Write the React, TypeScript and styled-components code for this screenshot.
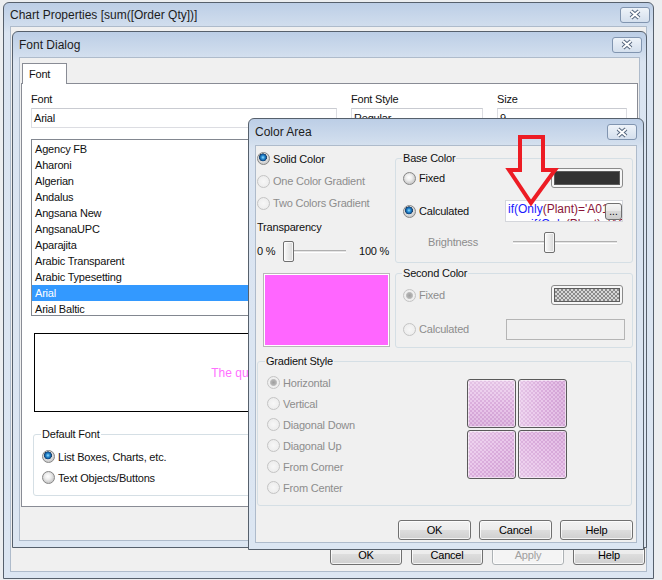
import React from "react";
import styled, { createGlobalStyle } from "styled-components";

const GlobalStyle = createGlobalStyle`
  html, body {
    margin: 0;
    padding: 0;
  }
  body {
    background: #eceef0;
    font-family: "Liberation Sans", Arial, sans-serif;
    font-size: 11px;
    letter-spacing: -0.2px;
    color: #111;
  }
`;

const Desktop = styled.div`
  position: relative;
  width: 662px;
  height: 580px;
  overflow: hidden;
`;

/* ---------- window chrome ---------- */

interface FrameProps {
  $x: number;
  $y: number;
  $w: number;
  $h: number;
  $z: number;
}

const WindowFrame = styled.div<FrameProps>`
  position: absolute;
  left: ${(p) => p.$x}px;
  top: ${(p) => p.$y}px;
  width: ${(p) => p.$w}px;
  height: ${(p) => p.$h}px;
  z-index: ${(p) => p.$z};
  box-sizing: border-box;
  display: flex;
  flex-direction: column;
  border: 1px solid #56606c;
  border-radius: 6px 6px 0 0;
  background: linear-gradient(
    to bottom,
    #bccee6 0,
    #d0dded 22px,
    #dae4f1 30px,
    #dce6f2 100%
  );
`;

const TitleBar = styled.div<{ $h: number; $gap: number }>`
  flex: none;
  height: ${(p) => p.$h}px;
  display: flex;
  align-items: center;
  justify-content: space-between;
  padding: 0 ${(p) => p.$gap}px 0 6px;
`;

const TitleText = styled.span`
  font-size: 12px;
  letter-spacing: 0;
  color: #1c1c1c;
  white-space: nowrap;
`;

const CloseButton = styled.div`
  width: 30px;
  height: 16px;
  box-sizing: border-box;
  border: 1px solid #8195b0;
  border-radius: 3px;
  background: linear-gradient(#eef3f9, #d4dfed);
  display: flex;
  align-items: center;
  justify-content: center;
`;

const ClientArea = styled.div`
  flex: 1;
  min-height: 0;
  margin: 0 6px 6px;
  box-sizing: border-box;
  background: #f0f0f0;
  border: 1px solid #aebbcb;
  display: flex;
  flex-direction: column;
`;

const CloseGlyph = () => (
  <svg width="14" height="11" viewBox="0 0 14 11">
    <path d="M3 2 L11 9 M11 2 L3 9" stroke="#56677e" strokeWidth="4" />
    <path d="M3 2 L11 9 M11 2 L3 9" stroke="#ffffff" strokeWidth="2" />
  </svg>
);

interface WindowProps {
  x: number;
  y: number;
  w: number;
  h: number;
  z: number;
  title: string;
  titleH: number;
  closeGap: number;
  children: React.ReactNode;
}

const Window = ({ x, y, w, h, z, title, titleH, closeGap, children }: WindowProps) => (
  <WindowFrame $x={x} $y={y} $w={w} $h={h} $z={z}>
    <TitleBar $h={titleH} $gap={closeGap}>
      <TitleText>{title}</TitleText>
      <CloseButton>
        <CloseGlyph />
      </CloseButton>
    </TitleBar>
    {children}
  </WindowFrame>
);

/* ---------- common controls ---------- */

const PushButton = styled.button<{ $w: number; $h: number; $disabled?: boolean }>`
  width: ${(p) => p.$w}px;
  height: ${(p) => p.$h}px;
  box-sizing: border-box;
  padding: 0;
  font: inherit;
  letter-spacing: inherit;
  border: 1px solid ${(p) => (p.$disabled ? "#adb2b5" : "#707070")};
  border-radius: 3px;
  background: ${(p) =>
    p.$disabled
      ? "#f4f4f4"
      : "linear-gradient(#f2f2f2 0, #ebebeb 50%, #dddddd 50%, #cfcfcf 100%)"};
  box-shadow: inset 0 0 0 1px rgba(255, 255, 255, 0.75);
  color: ${(p) => (p.$disabled ? "#a0a0a0" : "#000")};
`;

const ButtonRow = styled.div<{ $gap: number; $mt?: number }>`
  display: flex;
  justify-content: flex-end;
  gap: ${(p) => p.$gap}px;
  margin-top: ${(p) => p.$mt ?? 0}px;
`;

const OuterClient = styled(ClientArea)`
  justify-content: flex-end;
  padding: 0 1px 6px 0;
`;

const Row = styled.div<{ $h: number; $mt?: number }>`
  display: flex;
  align-items: center;
  height: ${(p) => p.$h}px;
  margin-top: ${(p) => p.$mt ?? 0}px;
`;

const RadioDot = styled.span<{ $checked?: boolean; $disabled?: boolean }>`
  flex: none;
  width: 13px;
  height: 13px;
  box-sizing: border-box;
  margin-right: 3px;
  border-radius: 50%;
  border: 1px solid ${(p) => (p.$disabled ? "#c4c4c4" : "#868686")};
  background: ${(p) => {
    const dot = !p.$checked
      ? ""
      : p.$disabled
      ? "radial-gradient(circle at 50% 50%, #9f9f9f 0, #b3b3b3 2.6px, #c9c9c9 3.4px, transparent 3.8px), "
      : "radial-gradient(circle at 45% 40%, #9ce2ff 0, #2f93d8 1.6px, #0f5496 3.2px, #24405f 3.8px, transparent 4.2px), ";
    const base = p.$disabled
      ? "radial-gradient(circle at 50% 50%, #f7f7f7 0, #ececec 6px)"
      : "radial-gradient(circle at 45% 40%, #ffffff 0, #eeeeee 3px, #cdcdcd 6px)";
    return dot + base;
  }};
`;

const OptionText = styled.span<{ $disabled?: boolean; $indent?: number; $w?: number }>`
  white-space: nowrap;
  box-sizing: border-box;
  width: ${(p) => (p.$w ? `${p.$w}px` : "auto")};
  padding-left: ${(p) => p.$indent ?? 0}px;
  color: ${(p) => (p.$disabled ? "#8d8d8d" : "#111")};
`;

interface RadioProps {
  label: string;
  h: number;
  mt?: number;
  checked?: boolean;
  disabled?: boolean;
  children?: React.ReactNode;
}

const Radio = ({ label, h, mt, checked, disabled, children }: RadioProps) => (
  <Row $h={h} $mt={mt}>
    <RadioDot $checked={checked} $disabled={disabled} />
    <OptionText $disabled={disabled}>{label}</OptionText>
    {children}
  </Row>
);

const GroupBox = styled.fieldset<{ $w?: number; $h: number; $mt?: number; $ml?: number }>`
  margin: ${(p) => p.$mt ?? 0}px 0 0 ${(p) => p.$ml ?? 0}px;
  padding: 0;
  width: ${(p) => (p.$w ? `${p.$w}px` : "auto")};
  height: ${(p) => p.$h}px;
  box-sizing: border-box;
  min-width: 0;
  border: 1px solid #d5dfe5;
  border-radius: 3px;
`;

const GroupLabel = styled.legend<{ $ml: number }>`
  margin-left: ${(p) => p.$ml}px;
  padding: 0 1px;
  line-height: 13px;
  color: #111;
`;

const GroupBody = styled.div<{ $pl: number; $pr?: number }>`
  padding: 0 ${(p) => p.$pr ?? 0}px 0 ${(p) => p.$pl}px;
`;

const Spacer = styled.div`
  flex: 1;
`;

const SliderTrack = styled.div<{ $w: number }>`
  width: ${(p) => p.$w}px;
  height: 21px;
  display: flex;
  align-items: center;
  background: linear-gradient(
    to bottom,
    transparent 9px,
    #b0b0b0 9px,
    #b0b0b0 10px,
    #e4e4e4 10px,
    #e4e4e4 11px,
    #ffffff 11px,
    #ffffff 12px,
    transparent 12px
  );
`;

const SliderThumb = styled.div<{ $at: number }>`
  margin-left: ${(p) => p.$at}px;
  width: 11px;
  height: 21px;
  box-sizing: border-box;
  border: 1px solid #707070;
  border-radius: 2px;
  background: linear-gradient(to right, #fafafa, #e6e6e6 60%, #d8d8d8);
  box-shadow: inset 0 0 0 1px rgba(255, 255, 255, 0.7);
`;

const TextBox = styled.div<{ $disabled?: boolean; $w?: number; $h: number }>`
  width: ${(p) => (p.$w ? `${p.$w}px` : "auto")};
  height: ${(p) => p.$h}px;
  box-sizing: border-box;
  border: 1px solid ${(p) => (p.$disabled ? "#b5b5b5" : "#dcdde2")};
  border-top-color: ${(p) => (p.$disabled ? "#b5b5b5" : "#c9cbd1")};
  background: ${(p) => (p.$disabled ? "#f0f0f0" : "#fff")};
  padding-left: 2px;
  line-height: ${(p) => p.$h - 2}px;
  overflow: hidden;
  white-space: nowrap;
`;

/* ---------- font dialog ---------- */

const FontClient = styled(ClientArea)`
  padding: 5px 1px 0;
`;

const TabStrip = styled.div`
  display: flex;
  height: 20px;
`;

const Tab = styled.div`
  position: relative;
  z-index: 1;
  margin-left: 1px;
  width: 45px;
  height: 21px;
  box-sizing: border-box;
  border: 1px solid #898c95;
  border-bottom: none;
  background: #fff;
  padding-left: 6px;
  line-height: 20px;
`;

const TabPanel = styled.div`
  width: 617px;
  height: 424px;
  box-sizing: border-box;
  border: 1px solid #898c95;
  background: #fff;
  padding: 8px 0 0 9px;
`;

const FieldGrid = styled.div`
  display: grid;
  grid-template-columns: 306px 132px 130px;
  column-gap: 14px;
`;

const FieldLabel = styled.div`
  line-height: 14px;
`;

const FieldBox = styled(TextBox)`
  margin-top: 2px;
`;

const ListBox = styled.div`
  margin-top: 11px;
  height: 177px;
  box-sizing: border-box;
  border: 1px solid #828790;
  background: #fff;
  padding-top: 1px;
  overflow: hidden;
`;

const ListItem = styled.div<{ $selected?: boolean }>`
  height: 16px;
  line-height: 16px;
  padding-left: 3px;
  white-space: nowrap;
  background: ${(p) => (p.$selected ? "#3399ff" : "transparent")};
  color: ${(p) => (p.$selected ? "#fff" : "#111")};
`;

const Preview = styled.div`
  margin: 17px 0 0 3px;
  width: 592px;
  height: 79px;
  box-sizing: border-box;
  border: 1px solid #000;
  display: flex;
  align-items: center;
  justify-content: center;
  font-size: 12px;
  letter-spacing: 0;
  color: #ff70ff;
`;

/* ---------- color area ---------- */

const ColorClient = styled(ClientArea)`
  padding: 1px 3px 0 1px;
`;

const TopSection = styled.div`
  display: grid;
  grid-template-columns: 138px 238px;
  align-items: start;
`;

const Column = styled.div<{ $grow?: boolean; $pt?: number }>`
  display: flex;
  flex-direction: column;
  flex: ${(p) => (p.$grow ? 1 : "none")};
  padding-top: ${(p) => p.$pt ?? 0}px;
`;

const SliderLine = styled.div`
  display: grid;
  grid-template-columns: 26px 63px auto;
  align-items: center;
  height: 24px;
  margin-top: 1px;
  & > span:last-child {
    padding-left: 13px;
  }
`;

const Swatch = styled.div<{ $color: string }>`
  margin: 10px 0 0 6px;
  width: 127px;
  height: 74px;
  box-sizing: border-box;
  border: 1px solid #b8b8b8;
  padding: 1px;
  background: #fff;
  &::before {
    content: "";
    display: block;
    height: 100%;
    background: ${(p) => p.$color};
  }
`;

const ColorButton = styled.div<{ $fill: string }>`
  width: 72px;
  height: 20px;
  box-sizing: border-box;
  border: 1px solid #8a8a8a;
  border-radius: 3px;
  padding: 2px;
  background: #f6f6f6;
  &::before {
    content: "";
    display: block;
    height: 100%;
    box-sizing: border-box;
    border: 1px solid #5c5c5c;
    background: ${(p) => p.$fill};
  }
`;

const FormulaBox = styled.div`
  position: relative;
  margin-left: auto;
  width: 118px;
  height: 22px;
  box-sizing: border-box;
  border: 1px solid #d4d6db;
  background: #fff;
  padding: 2px 0 0 2px;
  font-size: 12px;
  letter-spacing: 0;
  line-height: 13px;
  overflow: hidden;
  white-space: nowrap;
`;

const FormulaLine = styled.div<{ $indent?: number; $mt?: number }>`
  padding-left: ${(p) => p.$indent ?? 0}px;
  margin-top: ${(p) => p.$mt ?? 0}px;
`;

const Fn = styled.span`
  color: #1a1aff;
`;

const Field = styled.span`
  color: #8a1538;
`;

const EllipsisButton = styled.div`
  position: absolute;
  right: 0;
  top: 2px;
  width: 17px;
  height: 17px;
  box-sizing: border-box;
  border: 1px solid #707070;
  border-radius: 3px;
  background: linear-gradient(#f4f4f4 0, #e8e8e8 50%, #d9d9d9 50%, #cdcdcd 100%);
  font-size: 10px;
  line-height: 16px;
  text-align: center;
  color: #000;
`;

const DisabledField = styled(TextBox)`
  margin-right: -2px;
`;

const GradientBody = styled.div`
  display: flex;
  padding-left: 9px;
`;

const TileGrid = styled.div`
  margin: 11px 64px 0 0;
  display: grid;
  grid-template-columns: 49px 49px;
  grid-auto-rows: 49px;
  gap: 2px;
`;

const Tile = styled.div<{ $dir: string }>`
  box-sizing: border-box;
  border: 1px solid #5a5a5a;
  border-radius: 3px;
  box-shadow: inset 0 0 0 1px rgba(255, 255, 255, 0.55);
  background: linear-gradient(${(p) => p.$dir}, rgba(255, 255, 255, 0.3), rgba(255, 255, 255, 0) 55%, rgba(120, 60, 130, 0.08)),
    repeating-conic-gradient(#e9c6ea 0 25%, #d9abdb 0 50%) 0 0 / 4px 4px;
`;

const RedArrow = styled.svg`
  position: absolute;
  left: 500px;
  top: 128px;
  z-index: 10;
  overflow: visible;
`;

const fontNames = [
  "Agency FB",
  "Aharoni",
  "Algerian",
  "Andalus",
  "Angsana New",
  "AngsanaUPC",
  "Aparajita",
  "Arabic Transparent",
  "Arabic Typesetting",
  "Arial",
  "Arial Baltic",
];

const gradientStyles = [
  "Horizontal",
  "Vertical",
  "Diagonal Down",
  "Diagonal Up",
  "From Corner",
  "From Center",
];

const tileDirections = ["to bottom", "to right", "135deg", "45deg"];

export default function App() {
  return (
    <>
      <GlobalStyle />
      <Desktop>
        <Window
          x={3}
          y={2}
          w={651}
          h={577}
          z={1}
          title="Chart Properties [sum([Order Qty])]"
          titleH={23}
          closeGap={3}
        >
          <OuterClient>
            <ButtonRow $gap={9}>
              <PushButton $w={72} $h={21}>OK</PushButton>
              <PushButton $w={72} $h={21}>Cancel</PushButton>
              <PushButton $w={72} $h={21} $disabled>Apply</PushButton>
              <PushButton $w={72} $h={21}>Help</PushButton>
            </ButtonRow>
          </OuterClient>
        </Window>

        <Window x={12} y={31} w={635} h={517} z={2} title="Font Dialog" titleH={25} closeGap={4}>
          <FontClient>
            <TabStrip>
              <Tab>Font</Tab>
            </TabStrip>
            <TabPanel>
              <FieldGrid>
                <FieldLabel>Font</FieldLabel>
                <FieldLabel>Font Style</FieldLabel>
                <FieldLabel>Size</FieldLabel>
                <FieldBox $h={20}>Arial</FieldBox>
                <FieldBox $h={20}>Regular</FieldBox>
                <FieldBox $h={20}>9</FieldBox>
                <ListBox>
                  {fontNames.map((name) => (
                    <ListItem key={name} $selected={name === "Arial"}>
                      {name}
                    </ListItem>
                  ))}
                </ListBox>
                <ListBox />
                <ListBox />
              </FieldGrid>
              <Preview>The quick brown fox jumps over the lazy dog</Preview>
              <GroupBox $w={592} $h={68} $mt={16} $ml={2}>
                <GroupLabel $ml={7}>Default Font</GroupLabel>
                <GroupBody $pl={8}>
                  <Radio label="List Boxes, Charts, etc." h={21} mt={5} checked />
                  <Radio label="Text Objects/Buttons" h={21} />
                </GroupBody>
              </GroupBox>
            </TabPanel>
          </FontClient>
        </Window>

        <Window x={248} y={118} w={396} h={432} z={3} title="Color Area" titleH={26} closeGap={6}>
          <ColorClient>
            <TopSection>
              <Column>
                <Radio label="Solid Color" h={23} checked />
                <Radio label="One Color Gradient" h={22} disabled />
                <Radio label="Two Colors Gradient" h={22} disabled />
                <Row $h={22} $mt={2}>
                  <OptionText>Transparency</OptionText>
                </Row>
                <SliderLine>
                  <span>0 %</span>
                  <SliderTrack $w={63}>
                    <SliderThumb $at={0} />
                  </SliderTrack>
                  <span>100 %</span>
                </SliderLine>
                <Swatch $color="#ff66ff" />
              </Column>

              <Column>
                <GroupBox $h={111} $mt={5}>
                  <GroupLabel $ml={6}>Base Color</GroupLabel>
                  <GroupBody $pl={7} $pr={9}>
                    <Radio label="Fixed" h={24} mt={1}>
                      <Spacer />
                      <ColorButton $fill="#333333" />
                    </Radio>
                    <Radio label="Calculated" h={24} mt={9} checked>
                      <FormulaBox>
                        <FormulaLine>
                          <Fn>if(Only</Fn>
                          <Field>(Plant)='A01'</Field>
                        </FormulaLine>
                        <FormulaLine $indent={23} $mt={2}>
                          <Fn>if(Only</Fn>
                          <Field>(Plant)='A02'</Field>
                        </FormulaLine>
                        <EllipsisButton>...</EllipsisButton>
                      </FormulaBox>
                    </Radio>
                    <Row $h={24} $mt={7}>
                      <OptionText $disabled $indent={25} $w={110}>
                        Brightness
                      </OptionText>
                      <SliderTrack $w={104}>
                        <SliderThumb $at={31} />
                      </SliderTrack>
                    </Row>
                  </GroupBody>
                </GroupBox>

                <GroupBox $h={81} $mt={4}>
                  <GroupLabel $ml={6}>Second Color</GroupLabel>
                  <GroupBody $pl={7} $pr={9}>
                    <Radio label="Fixed" h={24} mt={3} checked disabled>
                      <Spacer />
                      <ColorButton $fill="repeating-conic-gradient(#8a8a8a 0 25%, #d6d6d6 0 50%) 0 0 / 4px 4px" />
                    </Radio>
                    <Radio label="Calculated" h={24} mt={10} disabled>
                      <Spacer />
                      <DisabledField $disabled $w={119} $h={21} />
                    </Radio>
                  </GroupBody>
                </GroupBox>
              </Column>
            </TopSection>

            <GroupBox $w={375} $h={151} $mt={7}>
              <GroupLabel $ml={7}>Gradient Style</GroupLabel>
              <GradientBody>
                <Column $grow $pt={4}>
                  {gradientStyles.map((name, i) => (
                    <Radio key={name} label={name} h={21} checked={i === 0} disabled />
                  ))}
                </Column>
                <TileGrid>
                  {tileDirections.map((dir) => (
                    <Tile key={dir} $dir={dir} />
                  ))}
                </TileGrid>
              </GradientBody>
            </GroupBox>

            <ButtonRow $gap={8} $mt={14}>
              <PushButton $w={73} $h={20}>OK</PushButton>
              <PushButton $w={73} $h={20}>Cancel</PushButton>
              <PushButton $w={73} $h={20}>Help</PushButton>
            </ButtonRow>
          </ColorClient>
        </Window>

        <RedArrow width="64" height="84" viewBox="0 0 64 84">
          <polygon
            points="20,9 43,9 43,42 55,42 31,75 9,42 20,42"
            fill="none"
            stroke="#ed1c24"
            strokeWidth="4"
            strokeLinejoin="miter"
          />
        </RedArrow>
      </Desktop>
    </>
  );
}
